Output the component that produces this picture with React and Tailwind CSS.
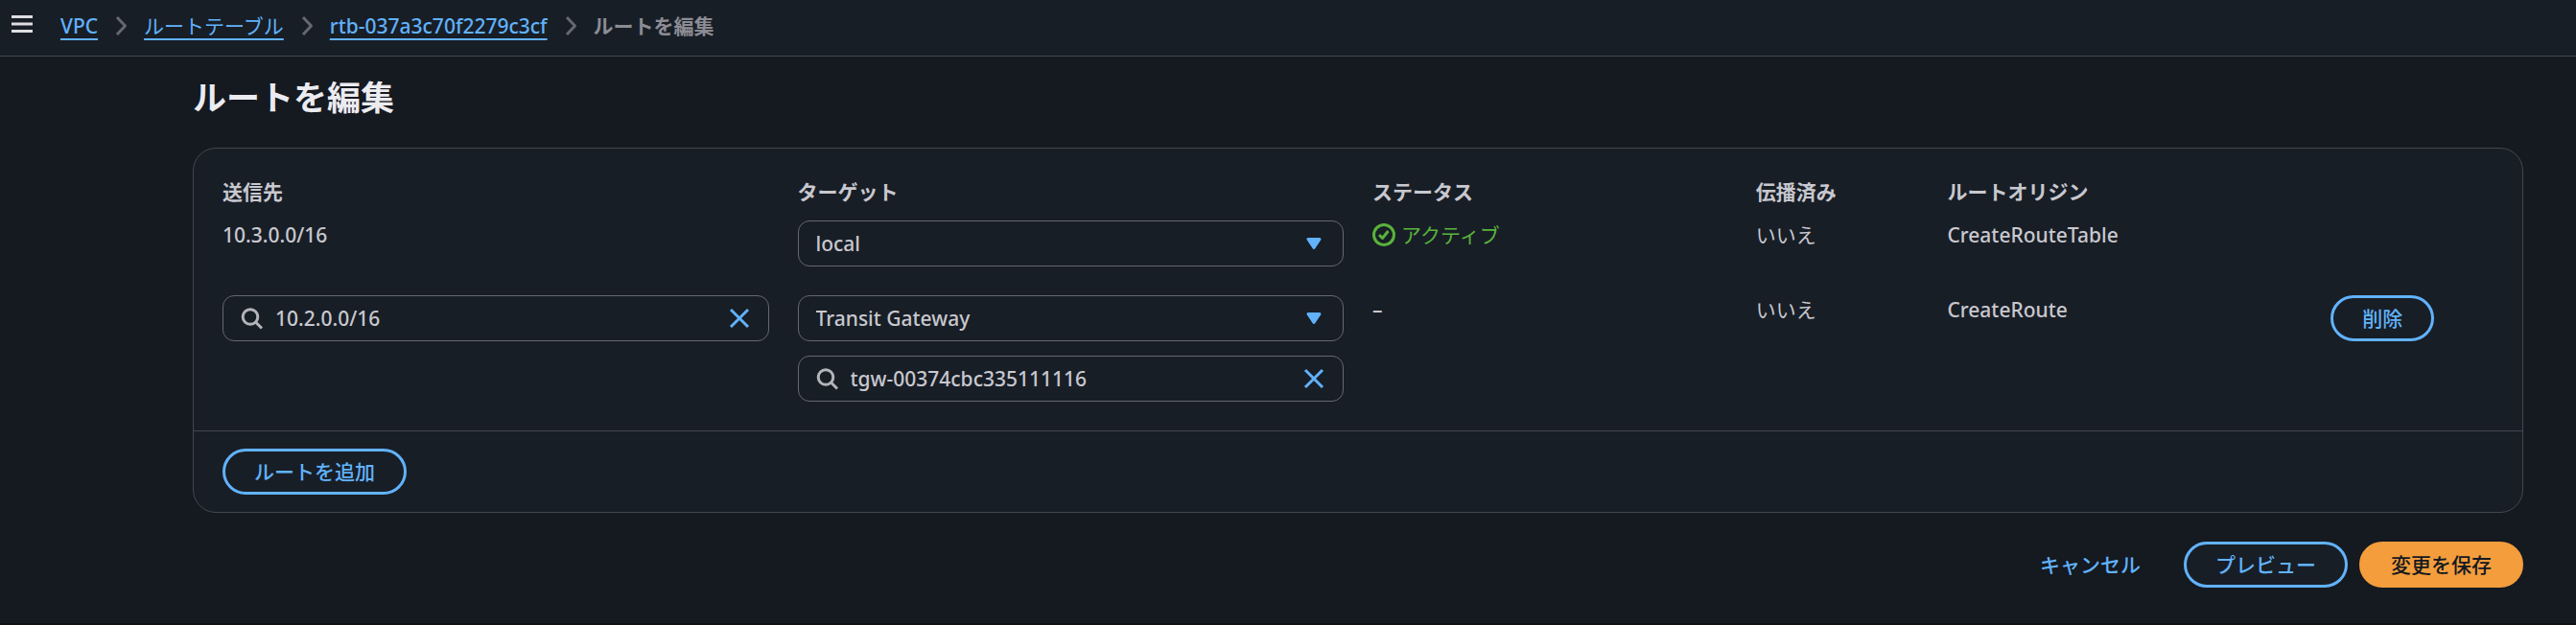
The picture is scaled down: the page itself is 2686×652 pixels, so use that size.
import React, { useState } from "react";

const MenuIcon = () => (
  <svg className="w-6 h-6" viewBox="0 0 24 24" fill="none" stroke="#dedee3" strokeWidth="3" aria-hidden="true">
    <path d="M1 4.5H23M1 12H23M1 19.5H23" />
  </svg>
);

const ChevronIcon = () => (
  <svg className="w-6 h-6 flex-none" viewBox="0 0 24 24" fill="none" stroke="#656871" strokeWidth="3" strokeLinejoin="round" aria-hidden="true">
    <path d="M8 3L16.5 12L8 21" />
  </svg>
);

const SearchIcon = () => (
  <svg className="w-6 h-6 flex-none" viewBox="0 0 24 24" fill="none" stroke="#b4b4bb" strokeWidth="3" strokeLinejoin="round" aria-hidden="true">
    <circle cx="10" cy="10.5" r="7.8" />
    <path d="M15.5 16L22 22.5" />
  </svg>
);

const CloseIcon = () => (
  <svg className="w-6 h-6" viewBox="0 0 24 24" fill="none" stroke="#61b2fb" strokeWidth="3" aria-hidden="true">
    <path d="M3 3L21 21M21 3L3 21" />
  </svg>
);

const CaretIcon = () => (
  <svg className="w-6 h-6 flex-none pointer-events-none" viewBox="0 0 24 24" fill="#61b2fb" stroke="#61b2fb" strokeWidth="3" strokeLinejoin="round" aria-hidden="true">
    <path d="M6 7.5H18L12 16.5Z" />
  </svg>
);

const SuccessIcon = () => (
  <svg className="w-6 h-6 flex-none" viewBox="0 0 24 24" fill="none" stroke="currentColor" strokeWidth="3" strokeLinejoin="round" aria-hidden="true">
    <circle cx="12" cy="12" r="10.5" />
    <path d="M7 12L10.5 15.5L16.5 8" />
  </svg>
);

const fieldCls = "flex items-center w-full h-12 px-[18px] border border-[#656871] rounded-xl";
const btnCls = "h-12 px-[30px] border-3 rounded-full font-medium whitespace-nowrap cursor-pointer";

function SearchField({ label, value, onChange }) {
  return (
    <div className={`${fieldCls} gap-3`}>
      <SearchIcon />
      <input
        type="text"
        aria-label={label}
        className="flex-1 min-w-0 bg-transparent outline-none font-medium"
        value={value}
        onChange={(e) => onChange(e.target.value)}
      />
      <button type="button" aria-label="クリア" className="flex-none cursor-pointer" onClick={() => onChange("")}>
        <CloseIcon />
      </button>
    </div>
  );
}

function SelectField({ label, value, options, onChange }) {
  return (
    <div className={fieldCls}>
      <select
        aria-label={label}
        className="flex-1 min-w-0 h-full bg-transparent appearance-none outline-none font-medium"
        value={value}
        onChange={(e) => onChange(e.target.value)}
      >
        {options.map((o) => (
          <option key={o} value={o}>{o}</option>
        ))}
      </select>
      <CaretIcon />
    </div>
  );
}

const OutlineButton = ({ children }) => (
  <button type="button" className={`${btnCls} border-[#61b2fb] text-[#61b2fb] bg-[#181e26]`}>{children}</button>
);

const crumbs = [
  { text: "VPC", weight: "font-medium" },
  { text: "ルートテーブル", weight: "font-normal" },
  { text: "rtb-037a3c70f2279c3cf", weight: "font-medium" },
];

const columns = [
  { title: "送信先", span: "col-span-3" },
  { title: "ターゲット", span: "col-span-3" },
  { title: "ステータス", span: "col-span-2" },
  { title: "伝播済み", span: "col-span-1" },
  { title: "ルートオリジン", span: "col-span-2" },
];

export default function App() {
  const [localTarget, setLocalTarget] = useState("local");
  const [destination, setDestination] = useState("10.2.0.0/16");
  const [targetType, setTargetType] = useState("Transit Gateway");
  const [targetId, setTargetId] = useState("tgw-00374cbc335111116");

  return (
    <div className="min-h-screen flex flex-col bg-[#151920] border-b-2 border-[#101216] text-[#c8c8cf] text-[21px] leading-[30px] font-['Noto_Sans','Noto_Sans_CJK_JP',sans-serif]">
      <header className="flex items-start pt-3 pb-4 pl-[11px] pr-6 bg-[#181e26] border-b border-[#424650]">
        <button type="button" aria-label="メニュー" className="mt-px mr-7 cursor-pointer">
          <MenuIcon />
        </button>
        <nav aria-label="パンくずリスト">
          <ol className="flex items-center gap-3">
            {crumbs.map((c) => (
              <li key={c.text} className="flex items-center gap-3">
                <a href="#" className={`${c.weight} text-[#61b2fb] underline decoration-2 underline-offset-[5px] whitespace-nowrap`}>{c.text}</a>
                <ChevronIcon />
              </li>
            ))}
            <li className="font-bold text-[#8c8c94] whitespace-nowrap" aria-current="page">ルートを編集</li>
          </ol>
        </nav>
      </header>

      <main className="pl-[201px] pr-[55px] pt-5">
        <h1 className="text-[35px] leading-[45px] font-bold text-[#ebebf0]">ルートを編集</h1>

        <form className="mt-[30px]" onSubmit={(e) => e.preventDefault()}>
          <section className="bg-[#181e26] border border-[#424650] rounded-3xl">
            <table className="block p-[30px]">
              <thead className="block">
                <tr className="grid grid-cols-12 gap-x-[30px] text-left">
                  {columns.map((c) => (
                    <th key={c.title} scope="col" className={`${c.span} font-bold whitespace-nowrap`}>{c.title}</th>
                  ))}
                </tr>
              </thead>
              <tbody className="flex flex-col gap-[30px] mt-[15px]">
                <tr className="grid grid-cols-12 gap-x-[30px]">
                  <td className="col-span-3 font-medium">10.3.0.0/16</td>
                  <td className="col-span-3">
                    <SelectField label="ターゲット" value={localTarget} options={["local"]} onChange={setLocalTarget} />
                  </td>
                  <td className="col-span-2">
                    <span className="flex items-center gap-1.5 text-[#58b33c]">
                      <SuccessIcon />
                      アクティブ
                    </span>
                  </td>
                  <td className="col-span-1">いいえ</td>
                  <td className="col-span-2 font-medium">CreateRouteTable</td>
                </tr>
                <tr className="grid grid-cols-12 gap-x-[30px]">
                  <td className="col-span-3">
                    <SearchField label="送信先" value={destination} onChange={setDestination} />
                  </td>
                  <td className="col-span-3 flex flex-col gap-[15px]">
                    <SelectField label="ターゲット" value={targetType} options={["Transit Gateway"]} onChange={setTargetType} />
                    <SearchField label="ターゲット ID" value={targetId} onChange={setTargetId} />
                  </td>
                  <td className="col-span-2 font-medium">–</td>
                  <td className="col-span-1">いいえ</td>
                  <td className="col-span-2 font-medium">CreateRoute</td>
                  <td className="col-span-1">
                    <OutlineButton>削除</OutlineButton>
                  </td>
                </tr>
              </tbody>
            </table>
            <div className="flex px-[30px] py-[18px] border-t border-[#424650]">
              <OutlineButton>ルートを追加</OutlineButton>
            </div>
          </section>

          <div className="flex justify-end gap-3 mt-[30px]">
            <button type="button" className={`${btnCls} border-transparent text-[#61b2fb]`}>キャンセル</button>
            <OutlineButton>プレビュー</OutlineButton>
            <button type="submit" className={`${btnCls} border-[#f39d3c] bg-[#f39d3c] text-[#151920]`}>変更を保存</button>
          </div>
        </form>
      </main>
    </div>
  );
}
